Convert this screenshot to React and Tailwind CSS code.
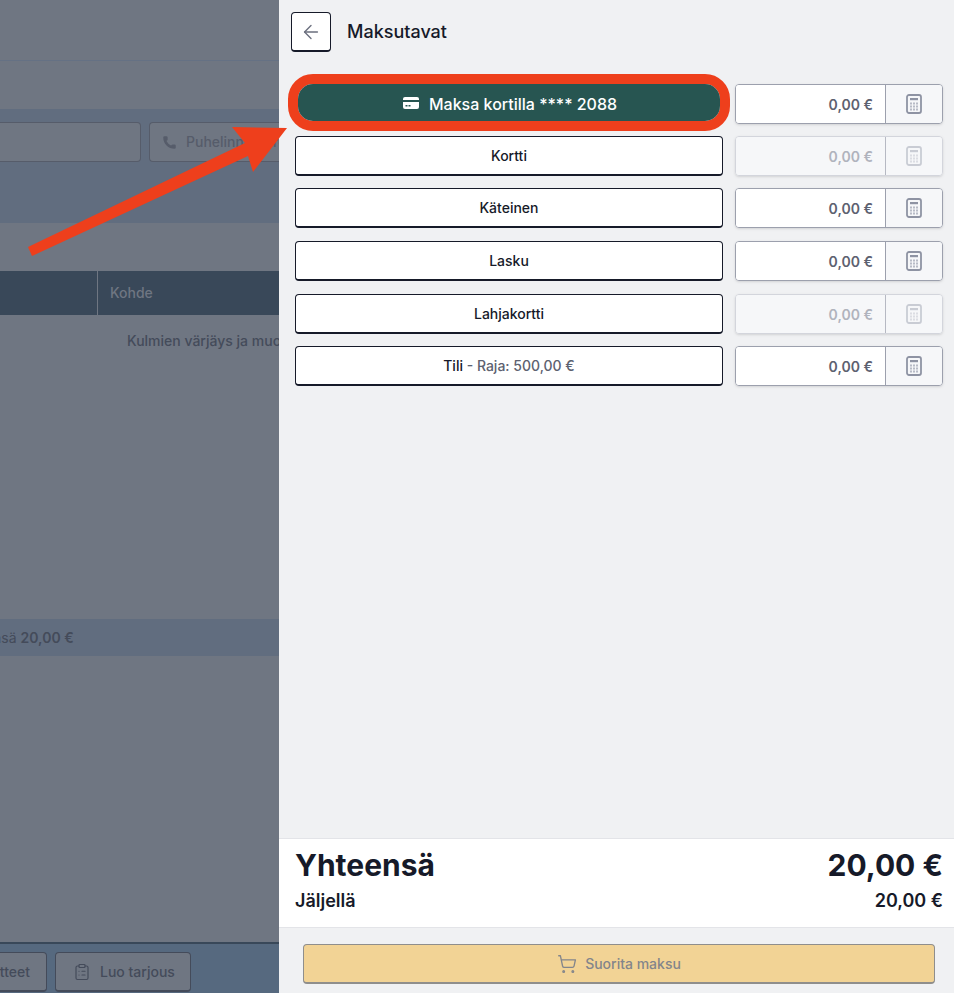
import { ArrowLeft, Phone, ClipboardList, ShoppingCart } from 'lucide-react';

const METHODS = [
  { label: 'Kortti', disabled: true },
  { label: 'Käteinen' },
  { label: 'Lasku', gap: true },
  { label: 'Lahjakortti', disabled: true, gap: true },
  { label: 'Tili', limit: 'Raja: 500,00 €' },
];

function CalcIcon() {
  return (
    <svg width="16" height="20" viewBox="0 0 16 20" fill="none">
      <rect x="1" y="1" width="14" height="18" rx="2" stroke="currentColor" strokeWidth="1.8" />
      <rect x="4" y="4" width="8" height="2.2" fill="currentColor" />
      {[8.5, 11.5, 14.5].map((y) =>
        [4, 7, 10].map((x) => <rect key={`${x}-${y}`} x={x} y={y} width="2" height="2" fill="currentColor" opacity="0.6" />)
      )}
    </svg>
  );
}

function CardIcon() {
  return (
    <svg width="16" height="12" viewBox="0 0 16 12">
      <path d="M2 0h12a2 2 0 0 1 2 2v1H0V2a2 2 0 0 1 2-2z" fill="currentColor" />
      <path d="M0 5h16v5a2 2 0 0 1-2 2H2a2 2 0 0 1-2-2z" fill="currentColor" />
      <rect x="2.5" y="8" width="2" height="1.5" fill="#275551" />
      <rect x="5.5" y="8" width="2" height="1.5" fill="#275551" />
    </svg>
  );
}

function AmountField({ disabled }) {
  return (
    <div className={`flex w-[208px] h-10 rounded border shadow-sm overflow-hidden ${disabled ? 'border-[#d3d5dc]' : 'border-[#9ca0ad]'}`}>
      <div className={`flex-1 flex items-center justify-end pr-3 pt-[2px] text-sm font-semibold ${disabled ? 'bg-[#f6f7f9] text-[#b0b3bd]' : 'bg-white text-[#5d6170]'}`}>
        0,00 €
      </div>
      <div className={`w-[57px] flex items-center justify-center bg-[#f6f7f9] border-l ${disabled ? 'border-[#b6b9c3] text-[#c9ccd4]' : 'border-[#9ca0ad] text-[#8e93a3]'}`}>
        <CalcIcon />
      </div>
    </div>
  );
}

function MethodRow({ label, limit, disabled, gap }) {
  return (
    <div className={`flex justify-between ${gap ? 'mt-[13px]' : 'mt-3'}`}>
      <button className="w-[428px] h-10 rounded bg-white border border-[#161a29] border-b-2 text-sm font-medium text-[#161a29]">
        {label}
        {limit && <span className="text-[#5d6170]"> - {limit}</span>}
      </button>
      <AmountField disabled={disabled} />
    </div>
  );
}

export default function App() {
  return (
    <div className="relative flex h-[993px] w-[954px] overflow-hidden font-['Inter',sans-serif]">
      {/* Dimmed page behind the drawer */}
      <div className="w-[279px] shrink-0 flex flex-col bg-[#6f7682]">
        <div className="h-[61px] shrink-0 border-b border-[#657184]" />
        <div className="h-[48px] shrink-0" />
        <div className="h-[114px] shrink-0 bg-[#616d7f] flex items-start gap-2 pt-[13px] overflow-hidden">
          <div className="w-[141px] h-10 shrink-0 rounded-r border border-l-0 border-[#565c6a] bg-[#6f7682]" />
          <div className="w-[130px] h-10 shrink-0 rounded-l border border-r-0 border-[#565c6a] bg-[#6f7682] flex items-center pl-[12px] gap-[9px] overflow-hidden whitespace-nowrap text-sm font-medium text-[#565c6a]">
            <Phone size={15} fill="currentColor" strokeWidth={0} className="shrink-0" />
            Puhelinnumero
          </div>
        </div>
        <div className="h-12 shrink-0" />
        <div className="h-11 shrink-0 bg-[#394859] flex">
          <div className="w-[98px] h-full border-r border-[#6f7682]" />
          <div className="pl-3 flex items-center text-sm font-medium text-[#6f7682]">Kohde</div>
        </div>
        <div className="h-[304px] shrink-0 pt-4 pl-[127px] whitespace-nowrap overflow-hidden text-sm font-medium text-[#444b5a]">
          Kulmien värjäys ja muotoilu
        </div>
        <div className="h-[37px] shrink-0 bg-[#616d7f] flex items-center whitespace-nowrap overflow-hidden text-sm text-[#444b5a]">
          <span className="-ml-[7px]">nsä</span>
          <span className="ml-1 font-semibold">20,00 €</span>
        </div>
        <div className="flex-1" />
        <div className="h-[51px] shrink-0 bg-[#56697f] border-t-2 border-[#394859] flex items-start gap-2 pt-2">
          <div className="w-[47px] h-10 rounded-r border border-l-0 border-b-2 border-[#444b5a] bg-[#6f7682] flex items-center justify-end pr-4 overflow-hidden whitespace-nowrap text-sm font-medium text-[#444b5a]">
            tteet
          </div>
          <div className="w-[136px] h-10 rounded border border-b-2 border-[#444b5a] bg-[#6f7682] flex items-center pl-[17px] gap-[9px] text-sm font-medium text-[#444b5a]">
            <ClipboardList size={18} strokeWidth={1.6} />
            Luo tarjous
          </div>
        </div>
      </div>

      {/* Payment drawer */}
      <div className="flex-1 flex flex-col bg-[#f0f1f3]">
        <div className="flex items-start gap-4 pl-3 pt-3 h-[84px] shrink-0">
          <button className="w-10 h-10 rounded bg-white border border-[#161a29] border-b-2 flex items-center justify-center text-[#6b6f7e]">
            <ArrowLeft size={22} strokeWidth={1.5} />
          </button>
          <h1 className="mt-[6px] text-lg font-medium text-[#161a29]">Maksutavat</h1>
        </div>

        <div className="flex-1 pl-4 pr-[11px]">
          <div className="flex justify-between">
            <div className="w-[428px] h-10 flex justify-center">
              {/* Red marker drawn round the button */}
              <div className="-mt-[10px] h-[57px] w-[442px] shrink-0 rounded-[25px] border-[10px] border-[#ee3f1c]">
                <button className="w-full h-full rounded-[15px] bg-[#275551] flex items-center justify-center gap-[10px] pl-[2px] text-base font-medium text-white">
                  <CardIcon />
                  <span className="pt-[2px]">Maksa kortilla **** 2088</span>
                </button>
              </div>
            </div>
            <AmountField />
          </div>
          {METHODS.map((m) => (
            <MethodRow key={m.label} {...m} />
          ))}
        </div>

        <div className="h-[90px] shrink-0 bg-white border-y border-[#e3e4e8] pl-4 pr-[11px] pt-2 text-[#161a29]">
          <div className="flex justify-between items-center text-[30px] leading-9 font-bold">
            <span>Yhteensä</span>
            <span>20,00 €</span>
          </div>
          <div className="mt-1 flex justify-between items-center text-lg font-semibold">
            <span>Jäljellä</span>
            <span>20,00 €</span>
          </div>
        </div>

        <div className="h-[65px] shrink-0 pl-6 pt-4">
          <button className="w-[632px] h-10 rounded bg-[#f2d395] border border-[#8f8e8c] border-b-2 flex items-center justify-center gap-2 text-sm font-medium text-[#83858b]">
            <ShoppingCart size={20} strokeWidth={1.6} />
            Suorita maksu
          </button>
        </div>
      </div>

      {/* Annotation arrow */}
      <svg className="absolute left-0 top-0 pointer-events-none" width="300" height="270" viewBox="0 0 300 270">
        <polygon points="28,247 245,143 232,127 287,128 253,172 248,156 32,256" fill="#ee3f1c" />
      </svg>
    </div>
  );
}
